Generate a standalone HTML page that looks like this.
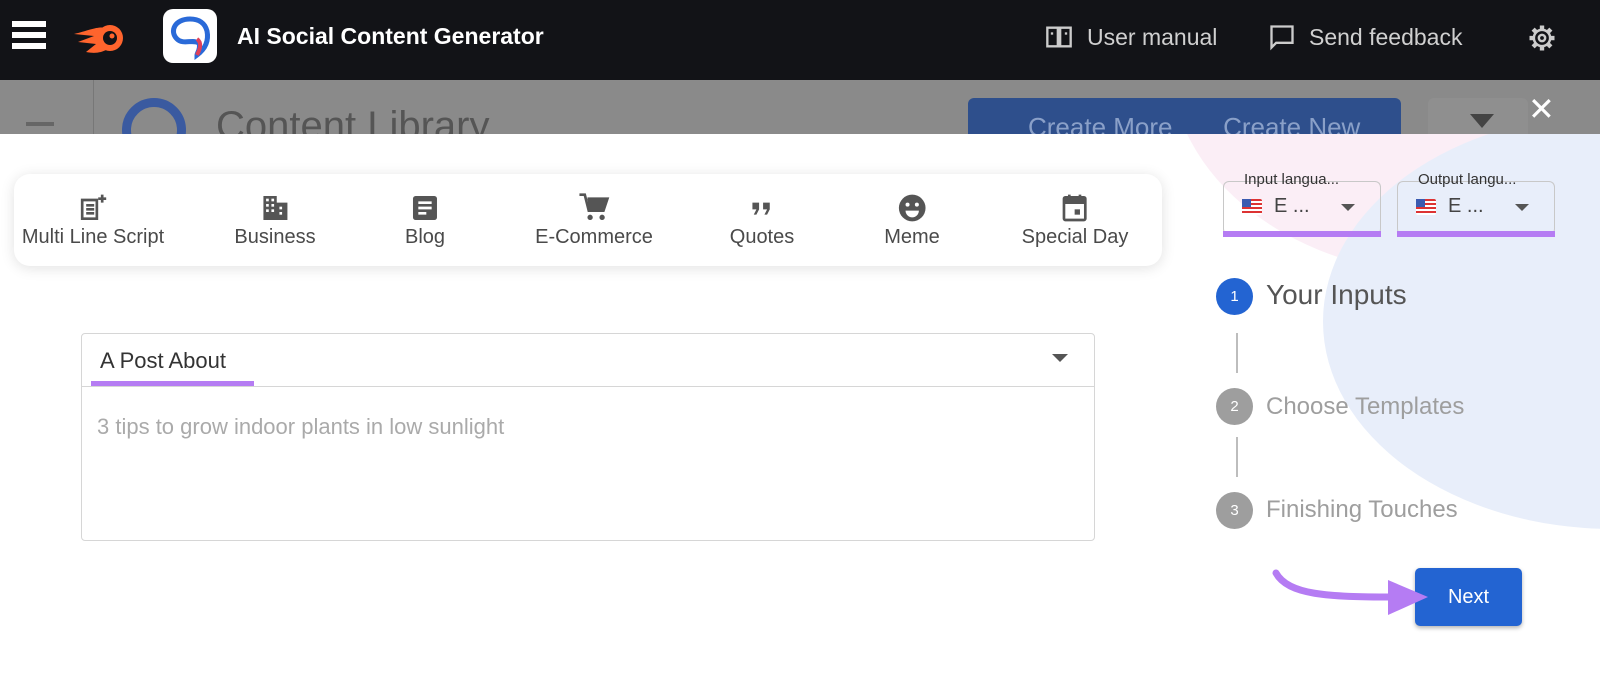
<!DOCTYPE html>
<html><head><meta charset="utf-8"><style>
*{margin:0;padding:0;box-sizing:border-box}
body{width:1600px;height:689px;overflow:hidden;background:#fff;font-family:"Liberation Sans",sans-serif;position:relative}
.top{position:absolute;left:0;top:0;width:1600px;height:80px;background:#121317;color:#fff}
.dim{position:absolute;left:0;top:80px;width:1600px;height:54px;background:#8a8a8a;overflow:hidden}
.abs{position:absolute}
.white{position:absolute;left:0;top:134px;width:1600px;height:555px;background:#fff;overflow:hidden}
.cat{position:absolute;top:174px;left:14px;width:1148px;height:92px;background:#fff;border-radius:16px;box-shadow:0 2px 14px rgba(0,0,0,.12)}
.it{position:absolute;top:18px;text-align:center;color:#4a4a4a;font-size:20px;transform:translateX(-50%);white-space:nowrap}
.it svg{display:block;margin:0 auto 2px}
.step{position:absolute;left:1216px;width:37px;height:37px;border-radius:50%;color:#fff;font-size:15px;text-align:center;line-height:37px;background:#9e9e9e}
.stxt{position:absolute;left:1266px;font-size:24px;color:#9e9e9e}
.line{position:absolute;left:1236px;width:2px;height:40px;background:#bdbdbd}
.lang{position:absolute;top:181px;width:158px;height:54px;border:1px solid #c8c8c8;border-radius:6px;border-bottom:none}
.lang .lbl{position:absolute;top:-11px;left:16px;background:transparent;font-size:15px;color:#333;padding:0 4px}
.lang .bar{position:absolute;left:-1px;right:-1px;bottom:-2px;height:6px;background:#b57cf3}
</style></head><body>
<div class="top">
 <div class="abs" style="left:12px;top:21px;width:34px;height:6px;background:#fff;box-shadow:0 11px 0 #fff,0 22px 0 #fff"></div>
 <svg class="abs" style="left:72px;top:22px" width="54" height="34" viewBox="0 0 54 34"><path d="M2 12 L22 14 L6 20 L24 22 L14 30 C24 32 30 30 34 28 L34 6 C26 4 18 8 2 12Z" fill="#ff642d"/><circle cx="38" cy="16" r="13" fill="#ff642d"/><circle cx="38" cy="16" r="7" fill="#121317"/><circle cx="40" cy="14" r="2.5" fill="#ff642d"/></svg>
 <div class="abs" style="left:163px;top:9px;width:54px;height:54px;background:#fff;border-radius:10px"><svg width="54" height="54" viewBox="0 0 54 54"><path d="M27 10 C12 10 6 22 14 30 C20 36 30 30 36 34 C38 40 34 44 34 46 C42 40 46 32 44 22 C42 14 36 10 27 10Z" fill="none" stroke="#2a6ad8" stroke-width="5"/><path d="M34 30 C40 34 36 42 34 46" stroke="#e0405a" stroke-width="4" fill="none"/></svg></div>
 <div class="abs" style="left:237px;top:23px;font-size:23px;font-weight:bold">AI Social Content Generator</div>
 <svg class="abs" style="left:1045px;top:23px" width="28" height="28" viewBox="0 0 24 24"><path d="M2 4h9v16H2zM13 4h9v16h-9z" fill="none" stroke="#ccc" stroke-width="2"/><rect x="5" y="8" width="2" height="2" fill="#ccc"/><rect x="17" y="8" width="2" height="2" fill="#ccc"/></svg>
 <div class="abs" style="left:1087px;top:24px;font-size:23px;color:#d0d0d0">User manual</div>
 <svg class="abs" style="left:1268px;top:23px" width="28" height="28" viewBox="0 0 24 24"><path d="M3 3h18v14H7l-4 4z" fill="none" stroke="#ccc" stroke-width="2"/></svg>
 <div class="abs" style="left:1309px;top:24px;font-size:23px;color:#d0d0d0">Send feedback</div>
 <svg class="abs" style="left:1527px;top:23px" width="30" height="30" viewBox="0 0 24 24"><g stroke="#ccc" stroke-width="3.5" stroke-linecap="butt"><path d="M12 2v4M12 18v4M2 12h4M18 12h4M4.9 4.9l2.8 2.8M16.3 16.3l2.8 2.8M4.9 19.1l2.8-2.8M16.3 7.7l2.8-2.8"/></g><circle cx="12" cy="12" r="6.5" fill="#121317" stroke="#ccc" stroke-width="2"/><circle cx="12" cy="12" r="2.5" fill="none" stroke="#ccc" stroke-width="2"/></svg>
</div>
<div class="dim">
 <div class="abs" style="left:93px;top:0;width:1px;height:54px;background:#777"></div>
 <div class="abs" style="left:26px;top:42px;width:28px;height:4px;background:#666"></div>
 <div class="abs" style="left:122px;top:18px;width:64px;height:64px;border-radius:50%;border:9px solid #3a5aa0"></div>
 <div class="abs" style="left:216px;top:24px;font-size:40px;color:#555">Content Library</div>
 <div class="abs" style="left:968px;top:18px;width:433px;height:60px;background:#2e4f8c;border-radius:6px;color:#8aa0c8;font-size:26px;padding:14px 0 0 60px">Create More &nbsp;&nbsp;&nbsp;&nbsp;&nbsp; Create New</div>
 <div class="abs" style="left:1428px;top:18px;width:100px;height:60px;background:#8f8f8f;border-radius:6px"></div>
 <div class="abs" style="left:1470px;top:34px;border:12px solid transparent;border-top:14px solid #444"></div>
 <div class="abs" style="left:1528px;top:10px;color:#fff;font-size:32px">✕</div>
</div>
<div class="white">
 <div class="abs" style="left:1170px;top:-289px;width:560px;height:430px;border-radius:50%;background:#fbeef6"></div>
 <div class="abs" style="left:1323px;top:-20px;width:580px;height:415px;border-radius:50%;background:#e8eefa"></div>
</div>
<div class="cat">
 <div class="it" style="left:79px"><svg width="32" height="32" viewBox="0 0 24 24"><path d="M4 6h11v14H4z M7 10h6M7 13h6M7 16h6" fill="none" stroke="#555" stroke-width="2"/><path d="M19 2v6M16 5h6" stroke="#555" stroke-width="2"/></svg>Multi Line Script</div>
 <div class="it" style="left:261px"><svg width="32" height="32" viewBox="0 0 24 24"><path d="M3 3h10v18H3zM13 8h8v13h-8z" fill="#555"/><g fill="#fff"><rect x="5" y="5" width="2" height="2"/><rect x="9" y="5" width="2" height="2"/><rect x="5" y="9" width="2" height="2"/><rect x="9" y="9" width="2" height="2"/><rect x="5" y="13" width="2" height="2"/><rect x="9" y="13" width="2" height="2"/><rect x="15" y="11" width="2" height="2"/><rect x="15" y="15" width="2" height="2"/></g></svg>Business</div>
 <div class="it" style="left:411px"><svg width="32" height="32" viewBox="0 0 24 24"><rect x="3" y="3" width="18" height="18" rx="2" fill="#555"/><path d="M7 8h10M7 12h10M7 16h6" stroke="#fff" stroke-width="2"/></svg>Blog</div>
 <div class="it" style="left:580px"><svg width="32" height="32" viewBox="0 0 24 24"><path d="M1 2h4l3 12h11l3-9H7" fill="none" stroke="#555" stroke-width="2"/><path d="M7 5h15l-3 9H8z" fill="#555"/><circle cx="9" cy="19" r="2" fill="#555"/><circle cx="18" cy="19" r="2" fill="#555"/></svg>E-Commerce</div>
 <div class="it" style="left:748px"><svg width="32" height="32" viewBox="0 0 24 24"><path d="M5 8h5v5l-2 4H6l2-4H5zM13 8h5v5l-2 4h-2l2-4h-3z" fill="#555"/></svg>Quotes</div>
 <div class="it" style="left:898px"><svg width="32" height="32" viewBox="0 0 24 24"><circle cx="12" cy="12" r="10" fill="#555"/><circle cx="8.5" cy="9.5" r="1.5" fill="#fff"/><circle cx="15.5" cy="9.5" r="1.5" fill="#fff"/><path d="M7 14h10a5 5 0 0 1-10 0z" fill="#fff"/></svg>Meme</div>
 <div class="it" style="left:1061px"><svg width="32" height="32" viewBox="0 0 24 24"><rect x="4" y="4" width="16" height="17" rx="1" fill="none" stroke="#555" stroke-width="2"/><rect x="4" y="4" width="16" height="5" fill="#555"/><path d="M8 2v4M16 2v4" stroke="#555" stroke-width="2"/><rect x="12" y="13" width="4" height="4" fill="#555"/></svg>Special Day</div>
</div>
<div class="abs" style="left:81px;top:333px;width:1014px;height:208px;border:1px solid #d6d6d6;border-radius:4px">
 <div class="abs" style="left:0;right:0;top:52px;height:1px;background:#d6d6d6"></div>
 <div class="abs" style="left:18px;top:14px;font-size:22px;color:#333">A Post About</div>
 <div class="abs" style="left:9px;top:47px;width:163px;height:5px;background:#b57cf3"></div>
 <div class="abs" style="left:970px;top:20px;border:8px solid transparent;border-top:8px solid #555"></div>
 <div class="abs" style="left:15px;top:80px;font-size:22px;color:#aaa">3 tips to grow indoor plants in low sunlight</div>
</div>
<div class="lang" style="left:1223px"><div class="lbl">Input langua...</div>
 <div class="abs" style="left:18px;top:17px;width:20px;height:16px;background:repeating-linear-gradient(#d33 0 2px,#fff 2px 4px);border-radius:2px"><div style="width:9px;height:8px;background:#3b5bb0"></div></div>
 <div class="abs" style="left:50px;top:13px;font-size:20px;color:#444">E ...</div>
 <div class="abs" style="left:117px;top:22px;border:7px solid transparent;border-top:7px solid #555"></div>
 <div class="bar"></div></div>
<div class="lang" style="left:1397px"><div class="lbl">Output langu...</div>
 <div class="abs" style="left:18px;top:17px;width:20px;height:16px;background:repeating-linear-gradient(#d33 0 2px,#fff 2px 4px);border-radius:2px"><div style="width:9px;height:8px;background:#3b5bb0"></div></div>
 <div class="abs" style="left:50px;top:13px;font-size:20px;color:#444">E ...</div>
 <div class="abs" style="left:117px;top:22px;border:7px solid transparent;border-top:7px solid #555"></div>
 <div class="bar"></div></div>
<div class="step" style="top:278px;background:#2364d2">1</div>
<div class="stxt" style="top:279px;font-size:28px;color:#555">Your Inputs</div>
<div class="line" style="top:333px"></div>
<div class="step" style="top:388px">2</div>
<div class="stxt" style="top:393px">Choose Templates</div>
<div class="line" style="top:437px"></div>
<div class="step" style="top:492px">3</div>
<div class="stxt" style="top:496px">Finishing Touches</div>
<div class="abs" style="left:1415px;top:568px;width:107px;height:58px;background:#2364d2;border-radius:5px;color:#fff;font-size:20px;text-align:center;line-height:58px;box-shadow:0 2px 4px rgba(0,0,0,.3)">Next</div>
<svg class="abs" style="left:1268px;top:565px" width="170" height="60" viewBox="0 0 170 60"><path d="M8 8 C20 30 60 32 125 32" fill="none" stroke="#b57cf3" stroke-width="7" stroke-linecap="round"/><path d="M120 15 L160 32 L120 50 Z" fill="#b57cf3"/></svg>
</body></html>
